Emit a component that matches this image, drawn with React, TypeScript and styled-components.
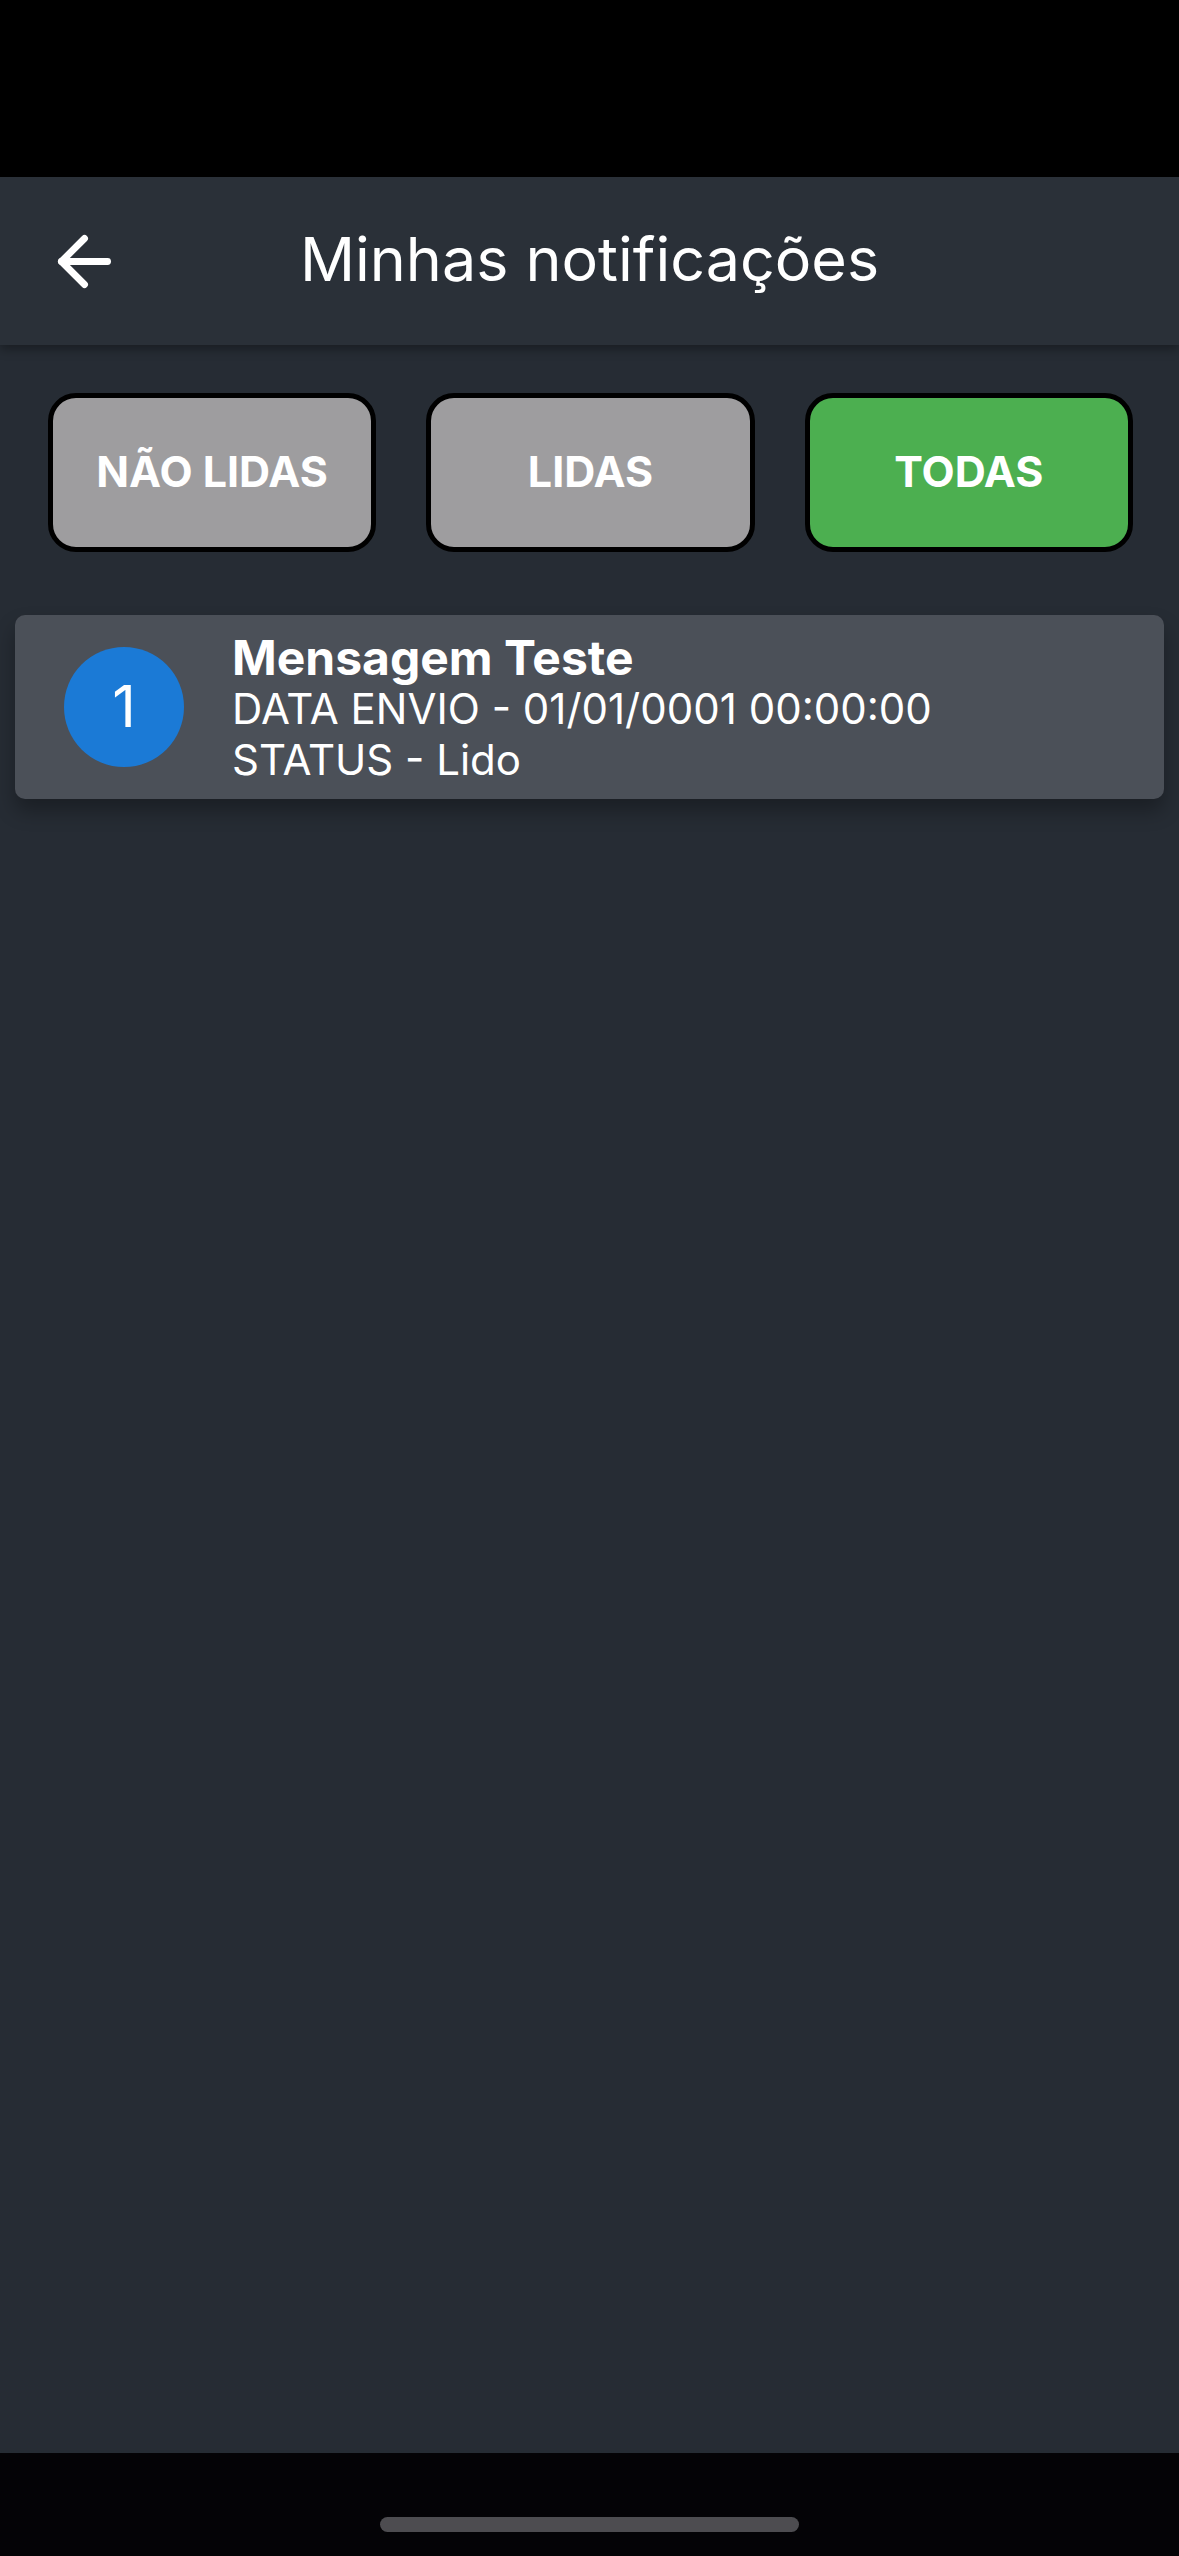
import styled, { createGlobalStyle } from 'styled-components'
import { ArrowLeft } from 'lucide-react'

interface Notificacao {
  id: number;
  titulo: string;
  dataEnvio: string;
  status: string;
}

const notificacoes: Notificacao[] = [
  { id: 1, titulo: 'Mensagem Teste', dataEnvio: '01/01/0001 00:00:00', status: 'Lido' },
]

const filtros = ['NÃO LIDAS', 'LIDAS', 'TODAS']

const GlobalStyle = createGlobalStyle`
  html, body {
    margin: 0;
    padding: 0;
    background: #000;
  }
  body {
    font-family: Inter, Roboto, "Liberation Sans", sans-serif;
  }
  * { box-sizing: border-box; }
`

const Screen = styled.div`
  width: 1179px;
  height: 2556px;
  display: flex;
  flex-direction: column;
  background-color: #262c34;
  color: #fff;
  overflow: hidden;
`

const StatusBar = styled.div`
  height: 177px;
  flex-shrink: 0;
  background-color: #000;
`

const Header = styled.header`
  height: 168px;
  flex-shrink: 0;
  display: grid;
  grid-template-columns: 1fr auto 1fr;
  align-items: center;
  padding: 0 45px;
  background-color: #2a3038;
  box-shadow: 0 4px 10px rgba(0, 0, 0, 0.35);
  position: relative;
  z-index: 1;

  .voltar {
    display: flex;
    color: #fff;
  }
  .titulo {
    margin: 0;
    font-size: 61px;
    font-weight: 400;
    padding-bottom: 4px;
  }
`

const Content = styled.main`
  flex: 1;
  display: flex;
  flex-direction: column;
`

const Filtros = styled.div`
  display: grid;
  grid-template-columns: repeat(3, 1fr);
  gap: 50px;
  padding: 48px 46px 0 48px;
`

const FiltroBotao = styled.button<{ $ativo?: boolean }>`
  height: 159px;
  border: 5px solid #000;
  border-radius: 28px;
  background-color: ${props => (props.$ativo ? '#4caf50' : '#9e9d9f')};
  color: #fff;
  font-family: Inter, Roboto, "Liberation Sans", sans-serif;
  font-weight: 700;
  font-size: 43px;
  padding: 0 0 4px;
`

const Card = styled.div`
  margin: 63px 15px 0;
  height: 184px;
  display: flex;
  align-items: center;
  gap: 48px;
  padding: 0 0 0 49px;
  border-radius: 10px;
  background-color: #4b5058;
  box-shadow: 0 12px 20px rgba(0, 0, 0, 0.3);
`

const Avatar = styled.div`
  width: 120px;
  height: 120px;
  flex-shrink: 0;
  border-radius: 50%;
  background-color: #1b7ad6;
  display: flex;
  align-items: center;
  justify-content: center;
  font-size: 58px;
  padding-bottom: 2px;
`

const Info = styled.div`
  display: flex;
  flex-direction: column;
  padding-top: 2px;

  .titulo {
    font-size: 48px;
    font-weight: 700;
    line-height: 51px;
  }
  .linha {
    font-size: 42px;
    line-height: 51px;
  }
`

const BottomBar = styled.div`
  height: 103px;
  flex-shrink: 0;
  background-color: #040306;
  display: flex;
  justify-content: center;
  padding-top: 64px;

  .indicador {
    width: 419px;
    height: 15px;
    border-radius: 8px;
    background-color: #4d4c50;
  }
`

export default function App() {
  return (
    <>
      <GlobalStyle />
      <Screen>
        <StatusBar />
        <Header>
          <span className='voltar'>
            <ArrowLeft size={79} strokeWidth={2.1} />
          </span>
          <h1 className='titulo'>Minhas notificações</h1>
          <span />
        </Header>
        <Content>
          <Filtros>
            {filtros.map(filtro => (
              <FiltroBotao key={filtro} $ativo={filtro === 'TODAS'}>
                {filtro}
              </FiltroBotao>
            ))}
          </Filtros>
          {notificacoes.map(n => (
            <Card key={n.id}>
              <Avatar>{n.id}</Avatar>
              <Info>
                <span className='titulo'>{n.titulo}</span>
                <span className='linha'>DATA ENVIO - {n.dataEnvio}</span>
                <span className='linha'>STATUS - {n.status}</span>
              </Info>
            </Card>
          ))}
        </Content>
        <BottomBar>
          <div className='indicador' />
        </BottomBar>
      </Screen>
    </>
  )
}
